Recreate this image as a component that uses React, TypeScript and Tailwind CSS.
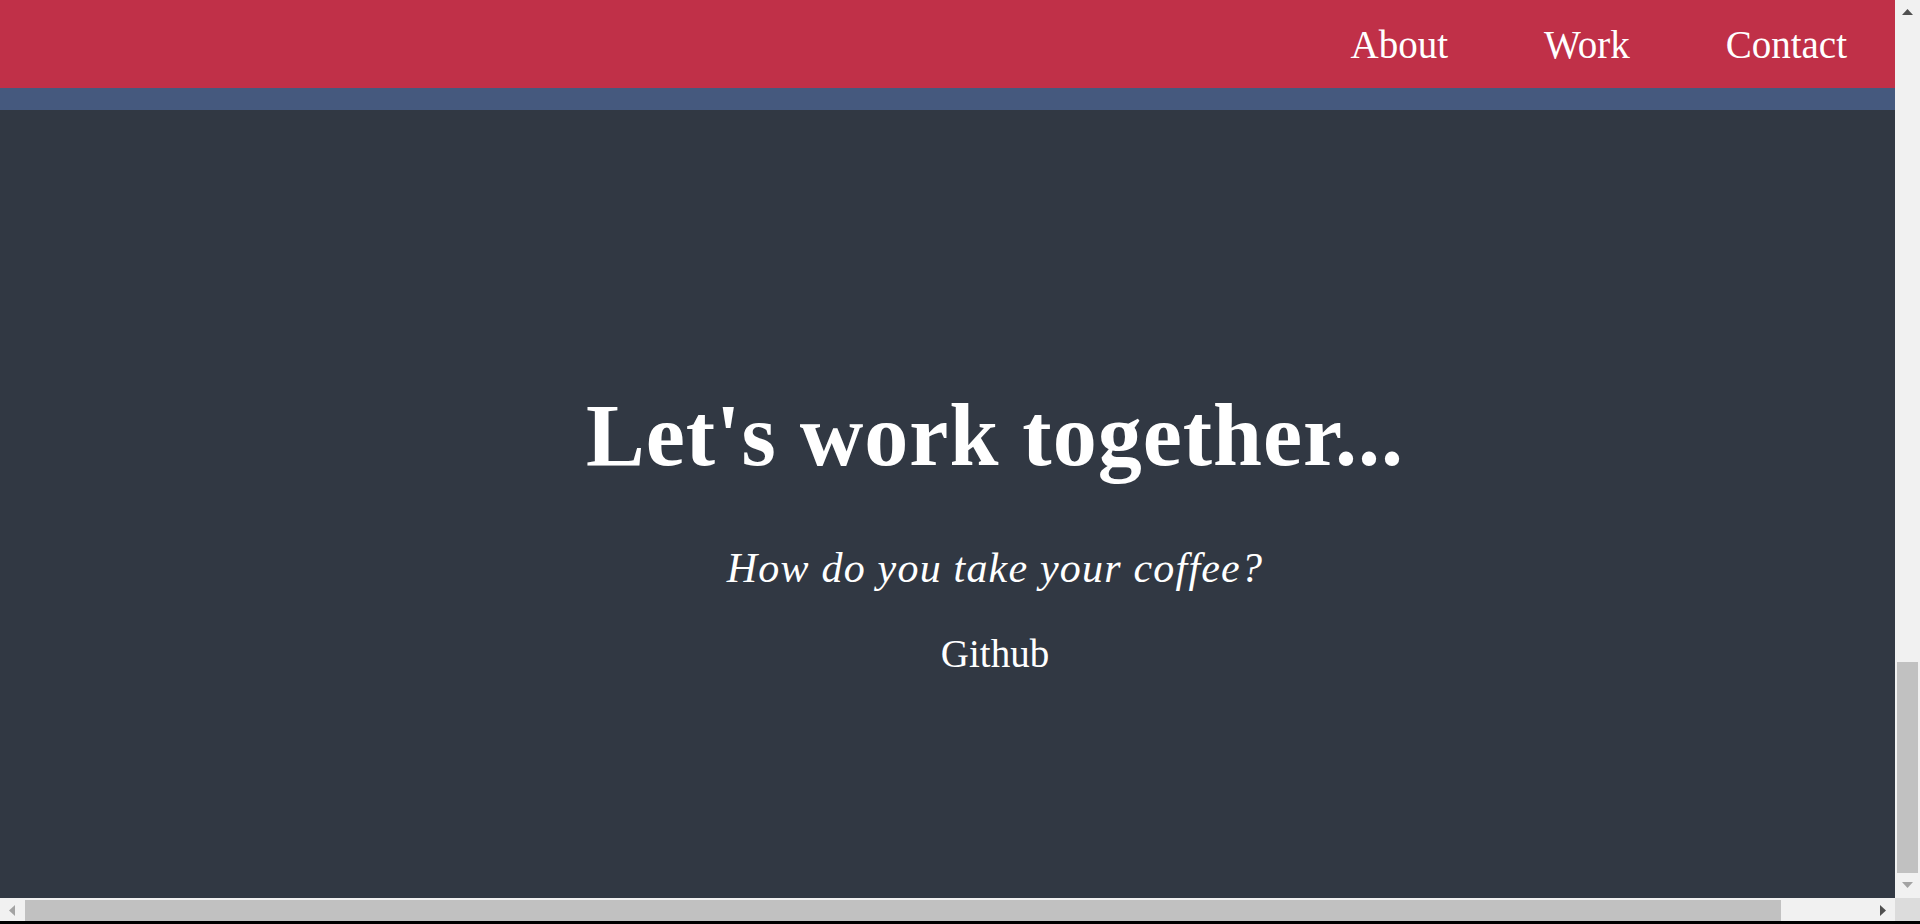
const links = ["About", "Work", "Contact"];

function ArrowUp({ color }: { color: string }) {
  return (
    <svg width="11" height="6" viewBox="0 0 11 6">
      <polygon points="5.5,0 11,6 0,6" fill={color} />
    </svg>
  );
}

function ArrowDown({ color }: { color: string }) {
  return (
    <svg width="11" height="6" viewBox="0 0 11 6">
      <polygon points="0,0 11,0 5.5,6" fill={color} />
    </svg>
  );
}

function ArrowLeft({ color }: { color: string }) {
  return (
    <svg width="6" height="11" viewBox="0 0 6 11">
      <polygon points="6,0 6,11 0,5.5" fill={color} />
    </svg>
  );
}

function ArrowRight({ color }: { color: string }) {
  return (
    <svg width="6" height="11" viewBox="0 0 6 11">
      <polygon points="0,0 6,5.5 0,11" fill={color} />
    </svg>
  );
}

export default function App() {
  return (
    <div className="flex h-[924px] w-[1920px] flex-col overflow-hidden bg-black font-['Liberation_Serif',serif] text-white">
      <div className="flex h-[898px] shrink-0">
        {/* page */}
        <div className="flex w-[1895px] shrink-0 flex-col overflow-hidden bg-[#313843]">
          <nav className="flex h-[88px] shrink-0 justify-end bg-[#c03048]">
            {links.map((l) => (
              <a key={l} href="#" className="flex items-center px-12 text-[39px] leading-none text-white">
                {l}
              </a>
            ))}
          </nav>
          <div className="h-[22px] shrink-0 bg-[#45597e]" />

          {/* contact section, wider than the window */}
          <main className="flex w-[1990px] flex-1 flex-col items-center pt-[282px] text-center">
            <h1 className="text-[88px] font-bold leading-none tracking-[1px]">Let's work together...</h1>
            <p className="mt-[67px] text-[42px] italic leading-none tracking-[1.2px]">How do you take your coffee?</p>
            <a href="#" className="mt-[45px] text-[39px] leading-none text-white">
              Github
            </a>
          </main>
        </div>

        {/* vertical scrollbar */}
        <div className="flex w-[25px] shrink-0 flex-col bg-[#f1f1f1]">
          <div className="flex h-[24px] justify-center pt-[9px]">
            <ArrowUp color="#505050" />
          </div>
          <div className="flex-1" />
          <div className="mx-[2px] h-[211px] bg-[#c1c1c1]" />
          <div className="flex h-[25px] justify-center pt-[9px]">
            <ArrowDown color="#a3a3a3" />
          </div>
        </div>
      </div>

      {/* horizontal scrollbar */}
      <div className="flex h-[23px] shrink-0">
        <div className="flex w-[1895px] shrink-0 bg-[#f1f1f1]">
          <div className="flex w-[25px] shrink-0 pl-[9px] pt-[7px]">
            <ArrowLeft color="#a3a3a3" />
          </div>
          <div className="mt-[2px] h-[21px] w-[1756px] shrink-0 bg-[#c1c1c1]" />
          <div className="flex flex-1 justify-end pr-[9px] pt-[7px]">
            <ArrowRight color="#505050" />
          </div>
        </div>
        <div className="w-[25px] shrink-0 bg-[#dcdcdc]" />
      </div>
    </div>
  );
}
